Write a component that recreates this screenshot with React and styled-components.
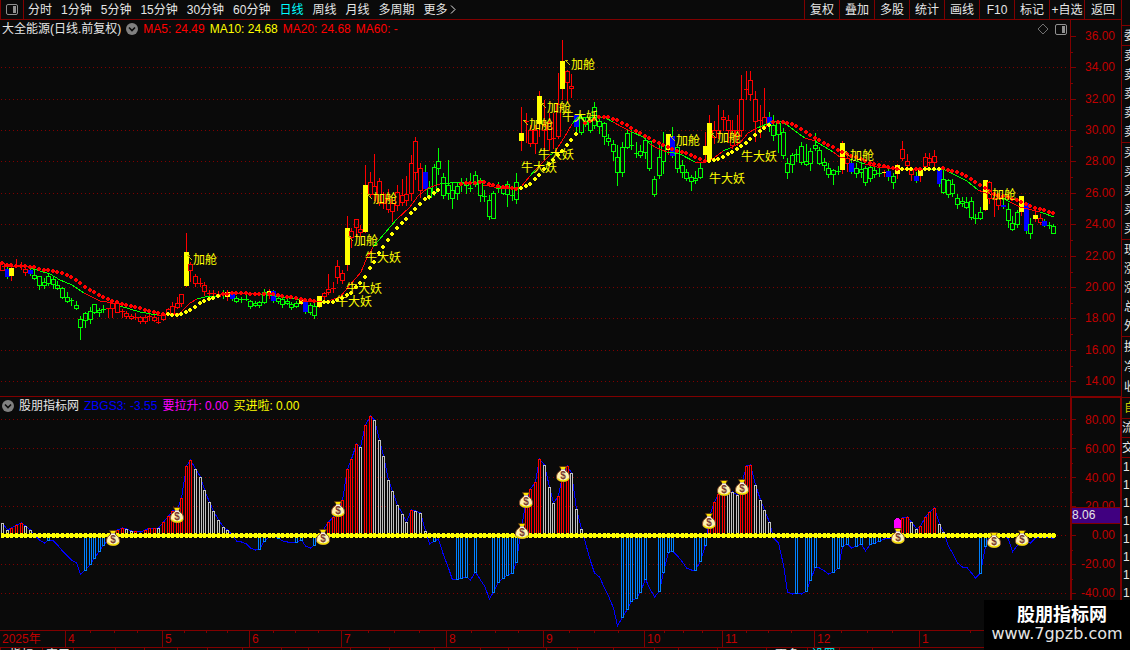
import React from 'react'
import styled, { createGlobalStyle } from 'styled-components';

const GlobalStyle = createGlobalStyle`
*{
box-sizing:border-box;
}
body{
margin:0;
background:#0a0a0a;
color:#e6e6e6;
font:12px/16px "Liberation Sans","Noto Sans CJK SC",sans-serif;
}
`

const line = '#800000'
const red = '#ff0000'
const green = '#00ff00'
const yellow = '#ffff00'

const Screen = styled.div`
position:relative;
display:flex;
height:100vh;
overflow:hidden;
`

const Main = styled.main`
flex:1;
min-width:0;
`

const Toolbar = styled.header`
display:flex;
justify-content:space-between;
height:20px;
border-bottom:1px solid ${line};
border-left:1px solid ${line};
`

const ToolGroup = styled.nav`
display:flex;
align-items:center;
gap:${p => p.$gap || 0}px;
`

const PanelToggle = styled.button`
display:flex;
align-items:center;
justify-content:center;
width:23px;
height:19px;
margin-right:-5px;
padding:0;
border:0;
border-right:1px solid ${line};
background:none;
`

const PeriodButton = styled.button`
padding:0;
border:0;
background:none;
font:inherit;
white-space:nowrap;
color:${p => p.$active ? '#00ffff' : '#e6e6e6'};
`

const ToolButton = styled.button`
width:${p => p.$last ? 37 : 35}px;
height:19px;
padding:0;
border:0;
border-left:1px solid ${line};
background:none;
color:#e6e6e6;
font:inherit;
line-height:18px;
white-space:nowrap;
`

const Pane = styled.section`
display:flex;
border-bottom:1px solid ${line};
`

const Plot = styled.div`
flex:1;
min-width:0;
`

const PaneHead = styled.div`
display:flex;
align-items:center;
gap:5px;
height:${p => p.$height}px;
padding-left:2px;
white-space:nowrap;
`

const HeadIcons = styled.div`
display:flex;
align-items:center;
gap:6px;
margin-left:auto;
padding-right:3px;
`

const Value = styled.span`
color:${p => p.$color};
`

const Chart = styled.svg`
display:block;
width:100%;
height:auto;
shape-rendering:crispEdges;
`

const ChartText = styled.text`
fill:${yellow};
font-size:12px;
`

const Axis = styled.div`
position:relative;
display:flex;
flex:0 0 51px;
border-left:${p => p.$thick ? 2 : 1}px solid ${line};
${p => p.$thick ? `border-top:1px solid ${line}; border-right:1px solid ${line};` : ''}
`

const Ticks = styled.svg`
flex:0 0 5px;
width:5px;
height:100%;
shape-rendering:crispEdges;
`

const AxisLabels = styled.div`
flex:1;
display:flex;
flex-direction:column;
justify-content:space-between;
padding:${p => p.$pad};
text-align:right;
color:#c00000;
`

const Marker = styled.div`
position:absolute;
top:109px;
left:0;
right:0;
height:17px;
border:solid ${line};
border-width:1px 0;
background:#400080;
line-height:15px;
`

const TimeAxis = styled.div`
display:grid;
grid-template-columns:65fr 97fr 87fr 92fr 105fr 97fr 101fr 78fr 92fr 105fr 202fr;
height:16px;
color:#c00000;
`

const Month = styled.div`
padding-left:2px;
${p => p.$first ? '' : `
border-left:1px solid ${line};
background:
linear-gradient(${line},${line}) 25% 0/1px 2px no-repeat,
linear-gradient(${line},${line}) 50% 0/1px 2px no-repeat,
linear-gradient(${line},${line}) 75% 0/1px 2px no-repeat;
`}
`

const Tabs = styled.nav`
display:flex;
border-top:1px solid ${line};
height:20px;
`

const Tab = styled.button`
flex:0 0 ${p => p.$width}px;
height:14px;
padding:0;
border:0;
border-left:1px solid ${line};
background:none;
color:${p => p.$active ? '#00ffff' : '#e6e6e6'};
font:inherit;
line-height:14px;
text-align:center;
`

const Quote = styled.aside`
flex:0 0 9px;
border-left:1px solid ${line};
padding-top:25px;
overflow:hidden;
`

const QuoteGroup = styled.div`
display:grid;
height:${p => p.$height}px;
padding-left:${p => p.$pad}px;
border-top:1px solid ${line};
color:${p => p.$color || '#e6e6e6'};
white-space:nowrap;
align-items:center;
`

const Watermark = styled.div`
position:absolute;
right:0;
bottom:0;
width:146px;
height:50px;
padding-top:4px;
background:#000;
color:#fff;
text-align:center;
`

const WatermarkName = styled.div`
padding-left:10px;
font-size:18px;
line-height:22px;
font-weight:700;
`

const WatermarkUrl = styled.div`
font:16px/16px "DejaVu Sans",sans-serif;
color:#e6e6e6;
`

const periods = ['分时', '1分钟', '5分钟', '15分钟', '30分钟', '60分钟', '日线', '周线', '月线', '多周期']
const tools = ['复权', '叠加', '多股', '统计', '画线', 'F10', '标记', '+自选', '返回']
const months = ['2025年', '4', '5', '6', '7', '8', '9', '10', '11', '12', '1']
const prices = ['36.00', '34.00', '32.00', '30.00', '28.00', '26.00', '24.00', '22.00', '20.00', '18.00', '16.00', '14.00']
const levels = ['80.00', '60.00', '40.00', '20.00', '0.00', '-20.00', '-40.00']

const tabs = [
    [42, '指标'], [31, '窗口'], [42], [29], [33], [30], [35], [39], [27], [42], [39], [45], [46], [28], [38],
    [31], [36], [41], [24], [39], [49], [41, '更多'], [32, '设置', true], [33], [60],
]

const quotes = [
    { rows: ['委'], height: 20, pad: 2 },
    { rows: ['卖', '卖', '卖', '卖', '卖'], height: 97, pad: 2 },
    { rows: ['买', '买', '买', '买', '买'], height: 97, pad: 2 },
    { rows: ['现', '涨', '涨', '总', '外'], height: 97, pad: 2 },
    { rows: ['换', '净', '收'], height: 61, pad: 2 },
    { rows: ['自'], height: 21, pad: 2, color: '#c8c800' },
    { rows: ['流'], height: 19, pad: 0 },
    { rows: ['交'], height: 20, pad: 0 },
    { rows: ['1', '1', '1', '1', '1', '1', '1', '1'], height: 145, pad: 1 },
]

// colour, high, body top, body bottom, low - one entry per day
const candles = `
r 261 263 270 270,b 267 269 277 278,y 266 268 276 280,r 259 265 266 267,y 262 266 267 269,r 267 269 272 275,
b 268 270 274 275,g 270 275 278 279,g 276 276 285 289,g 278 282 285 288,g 273 276 283 285,g 277 279 284 288,
g 281 285 288 289,g 287 288 297 298,g 292 297 301 302,g 298 300 301 305,g 301 305 308 309,g 316 319 327 339,
g 312 313 320 327,g 307 311 319 323,g 304 304 312 313,g 308 310 312 316,g 305 309 310 312,r 308 308 309 317,
r 302 303 308 317,r 302 303 312 312,r 309 311 312 317,r 311 313 316 318,r 314 316 318 319,r 313 317 318 319,
r 316 317 321 323,r 315 317 321 323,r 313 316 317 320,r 314 317 320 321,r 317 322 323 323,r 313 314 319 320,
r 308 309 314 315,r 302 306 314 315,r 297 303 307 308,r 294 294 303 306,y 233 252 286 286,r 262 264 270 281,
r 274 276 283 286,r 278 283 284 286,r 282 285 291 295,r 290 293 293 296,r 290 293 294 298,r 291 294 296 297,
g 290 294 295 298,y 290 292 297 300,b 292 294 299 300,g 296 298 301 302,g 297 299 300 302,g 295 299 299 300,
g 300 301 306 308,g 301 303 305 306,g 301 302 305 307,g 289 292 302 303,y 289 291 296 298,b 290 291 301 302,
g 295 298 301 303,g 298 299 304 307,g 299 301 303 304,g 302 304 307 309,g 301 303 306 307,y 299 300 304 304,
b 300 302 312 313,g 303 305 312 314,g 303 306 315 318,y 296 296 307 307,r 292 293 296 302,r 274 289 292 294,
r 282 288 289 292,r 260 266 277 283,r 270 273 280 283,y 216 228 265 270,r 228 231 237 247,r 219 219 227 236,
r 225 229 232 236,y 165 185 232 232,r 172 182 194 196,r 154 186 194 200,r 178 181 202 205,r 192 194 203 208,
r 189 199 209 212,r 198 203 211 221,r 185 192 205 210,r 179 195 202 205,r 176 194 200 205,r 155 163 193 200,
r 137 141 172 179,r 163 168 190 197,b 165 172 189 190,g 181 188 197 199,g 164 167 192 195,g 148 161 168 174,
g 173 177 195 198,g 160 185 193 199,g 183 190 198 208,g 182 186 193 199,g 178 183 183 191,g 178 182 185 193,
g 173 188 188 191,g 171 175 184 186,g 178 180 195 201,g 190 196 196 201,g 195 200 216 219,g 191 193 218 218,
g 182 186 188 192,g 185 188 193 194,g 181 184 194 206,g 188 195 196 200,g 173 182 199 203,y 107 133 141 150,
r 113 121 122 142,r 125 130 143 146,r 125 130 143 153,y 91 96 124 136,r 100 125 130 150,r 113 122 139 150,
r 113 138 138 148,r 73 104 136 138,y 40 61 89 99,r 70 71 82 101,r 74 86 88 97,b 114 115 127 133,
g 115 118 132 134,g 118 121 124 126,g 118 119 130 132,g 102 107 125 128,g 115 121 126 133,g 122 123 136 144,
g 134 138 141 145,g 140 144 151 160,g 145 157 172 185,g 142 147 172 176,g 129 133 147 148,g 128 145 146 149,
g 142 153 153 157,g 145 151 155 157,g 137 140 152 158,g 141 141 168 170,g 176 179 194 196,g 142 157 175 178,
g 132 145 161 173,y 134 134 150 154,b 127 136 156 157,g 146 147 168 172,g 160 165 172 177,g 169 172 178 180,
g 175 177 181 190,g 171 178 180 183,g 162 168 177 178,y 132 146 155 158,y 115 123 160 160,r 121 130 137 143,
r 105 130 133 138,r 110 117 119 130,r 115 120 130 142,r 120 130 145 148,r 115 130 135 145,r 75 99 130 136,
r 71 89 89 99,r 71 80 94 100,r 91 99 121 141,r 105 120 121 137,r 88 117 126 127,b 112 117 124 131,
g 115 125 135 140,g 121 123 134 152,g 128 132 155 158,g 158 163 172 178,g 153 155 164 172,g 149 154 155 161,
g 142 146 162 164,g 144 161 164 165,g 148 151 163 170,g 133 145 148 150,g 147 150 163 164,g 158 162 165 170,
g 163 168 174 177,g 169 170 174 184,g 166 171 172 174,y 141 143 170 173,r 155 158 163 171,b 161 163 172 173,
g 163 168 173 177,g 163 169 172 177,g 166 168 182 185,g 163 167 178 181,g 166 170 174 177,g 168 173 174 176,
y 170 172 173 176,b 169 171 177 180,g 173 176 182 188,y 164 165 174 178,r 141 149 158 160,r 154 161 165 167,
r 168 170 174 180,b 172 176 181 182,y 168 169 176 181,r 153 157 166 168,r 153 158 162 165,r 150 156 162 166,
b 168 170 184 186,g 170 179 192 193,g 179 180 194 197,g 179 184 193 196,g 194 198 204 208,g 197 201 203 206,
g 197 202 207 208,g 197 201 217 219,g 214 218 219 223,g 207 212 218 219,y 180 180 210 210,r 181 182 198 203,
r 195 198 199 216,r 193 198 205 209,b 197 205 207 208,g 203 209 220 227,g 216 223 229 230,g 210 212 224 227,
y 196 196 212 215,b 203 203 231 233,g 218 224 233 238,y 211 215 219 221,r 214 218 222 224,b 219 221 226 226,
g 222 225 226 228,g 224 226 233 233`.split(',').map(c => {
    const [kind, ...y] = c.trim().split(' ')
    return [kind, ...y.map(Number)]
})

// dotted trend line: yellow while rising, red while falling
const trend = [
    [red, [[2, 263], [8, 265], [20, 266], [32, 267], [45, 270], [58, 272], [70, 276], [80, 283], [90, 290], [100, 296], [112, 301], [127, 305], [140, 308], [152, 312], [163, 314]]],
    [yellow, [[166, 314], [172, 315], [182, 314], [190, 310], [200, 303], [208, 299], [215, 297], [220, 296]]],
    [red, [[223, 294], [240, 293], [258, 294], [270, 294], [290, 297], [300, 299], [318, 301]]],
    [yellow, [[320, 302], [332, 302], [342, 298], [351, 293], [360, 283], [365, 277], [369, 270], [374, 262], [378, 255], [383, 247], [388, 240], [392, 234], [397, 228], [406, 219], [415, 209], [424, 200], [440, 189]]],
    [red, [[458, 184], [483, 182], [493, 185], [517, 189]]],
    [yellow, [[519, 189], [530, 184], [539, 175], [548, 165], [557, 156], [567, 145], [578, 131]]],
    [red, [[582, 124], [599, 117], [608, 117], [617, 120], [627, 125], [636, 131], [644, 135], [653, 140], [663, 145], [677, 151], [687, 153], [695, 157], [706, 161]]],
    [yellow, [[708, 161], [718, 159], [732, 152], [746, 143], [755, 135], [764, 128], [771, 124]]],
    [red, [[773, 122], [783, 122], [792, 124], [801, 129], [810, 135], [823, 142], [833, 147], [847, 154], [860, 159], [873, 164], [887, 167], [899, 169]]],
    [yellow, [[900, 169], [912, 169]]],
    [red, [[913, 169], [921, 169]]],
    [yellow, [[922, 169], [942, 169]]],
    [red, [[943, 168], [953, 171], [967, 176], [980, 185], [992, 193], [1003, 196], [1017, 200], [1035, 208], [1055, 213]]],
]

const average = [
    [red, '2,266 30,266'], [green, '30,268 50,274 60,280 72,285 84,293'], [red, '84,293 100,301 120,304'],
    [green, '120,306 140,312 157,315'], [red, '157,315 165,315 180,313 190,303 197,299'], [green, '197,299 205,297 217,296'],
    [red, '217,295 235,293 258,294'], [green, '258,294 275,296 302,300'],
    [red, '302,301 325,302 340,297 350,285 361,272 366,260 373,247'], [green, '373,247 385,233 397,219'],
    [red, '397,219 410,207 418,196 428,188 440,184'], [green, '440,184 460,182 483,183'], [red, '483,185 500,188 512,189 521,187 530,176'],
    [green, '530,176 535,170'], [red, '535,170 550,155'], [green, '550,155 555,152'], [red, '555,152 567,133 572,124'],
    [green, '572,124 577,118 604,117 613,122'], [red, '613,122 622,127 632,132'], [green, '632,132 643,137 650,144'],
    [red, '650,144 657,148 667,152'], [green, '667,152 680,154 695,162'], [red, '695,162 700,163 710,161 723,151'],
    [green, '723,151 730,148'], [red, '730,148 740,143 748,133 757,128'], [green, '757,128 767,124 772,121 782,122 790,127 799,134 805,138'],
    [red, '805,138 815,141'], [green, '815,141 833,152'], [red, '833,152 840,157 850,159'], [green, '850,159 865,164'],
    [red, '865,164 877,167 897,169 923,169'], [green, '923,169 943,169 957,176 967,181 978,190'], [red, '978,190 983,192 1003,198'],
    [green, '1003,198 1010,202'], [red, '1010,202 1020,207 1040,212'], [green, '1040,212 1054,217'],
]

const buyTags = [[193, 259], [354, 240], [373, 198], [529, 124], [547, 107], [571, 64], [676, 140], [717, 137], [850, 155], [992, 194]]
const bullTags = [[336, 301], [346, 288], [365, 257], [521, 167], [538, 154], [562, 116], [709, 178], [741, 156]]

// day index, y, bar colour (none = line only)
const strength = `
0 523 w,1 530 w,2 528 r,3 525 r,4 523 r,5 526 w,6 530 w,7 535,8 540,9 543,10 540 b,11 541,12 545,13 551,14 556,15 560,16 563,17 574,
18 570 b,19 564 b,20 558 b,21 551 b,22 545 b,23 540,24 533,25 530 r,26 528 r,27 529 w,28 531 w,29 531 r,30 532,31 530 r,32 528 r,
33 528 r,34 528 w,35 522 r,36 516 r,37 511 r,38 509 r,39 498 r,40 466 r,41 460 r,42 469 w,43 477 w,44 490 w,45 502 w,46 511 w,
47 520 w,48 527 w,49 530 w,50 535,51 541,52 542,53 544,54 548,55 550,56 549 b,57 541 b,58 537,59 536,60 538 b,61 541,62 542,63 542,
64 542 b,65 540 b,66 546,67 548,68 545 b,69 536,70 528,71 522 r,72 517 r,73 509 r,74 500 r,75 469 r,76 459 r,77 444 r,78 447 w,
79 425 r,80 416 r,81 420 w,82 440 w,83 456 w,84 480 w,85 491 w,86 505 w,87 514 w,88 522 w,89 510 r,90 511 w,91 513 w,92 531 w,
93 544,94 541 b,95 539,96 555,97 568,98 580,99 579 b,100 578 b,101 577 b,102 580,103 572 b,104 580,105 586,106 599,107 592 b,
108 582 b,109 578 b,110 575 b,111 573 b,112 562 b,113 527,114 500 r,115 489 r,116 482 r,117 459 r,118 465 w,119 487 w,120 503 w,
121 496 r,122 475 r,123 466 r,124 473 w,125 509 w,126 529 w,127 543,128 561,129 573,130 577,131 588,132 596,133 608,134 626,135 617 b,
136 609 b,137 601 b,138 598 b,139 592 b,140 579 b,141 588,142 597,143 591 b,144 572 b,145 552 b,146 551 b,147 556,148 562,149 568,
150 570,151 570 b,152 561 b,153 545 b,154 516 r,155 502 r,156 494 r,157 488 r,158 493 w,159 492 w,160 495 w,161 485 r,162 466 r,
163 465 r,164 485 w,165 500 w,166 510 w,167 522 w,168 538,169 543,170 565,171 592,172 594,173 593 b,174 594,175 591 b,176 580 b,
177 567 b,178 568,179 571,180 574,181 572 b,182 568 b,183 546 b,184 544 b,185 548,186 546 b,187 544 b,188 551,189 544 b,190 543 b,
191 541 b,192 539,193 538,194 538,195 524,196 518 r,197 517 r,198 522 w,199 529 w,200 526 r,201 517 r,202 512 r,203 508 r,204 524 w,
205 532 w,206 546,207 553,208 563,209 567,210 567,211 573,212 578,213 573 b,214 546 b,215 537,216 540,217 536,218 534,219 539,
220 552,221 545,222 537,223 541,224 543,225 538,226 537,227 538,228 537,229 539`.split(',').map(s => {
    const [i, y, kind] = s.trim().split(' ')
    return { i: Number(i), y: Number(y), kind }
})

const bags = [[113, 539], [177, 516], [323, 538], [338, 510], [522, 532], [526, 501], [563, 475], [709, 522], [724, 489], [742, 488], [898, 537], [994, 541], [1022, 539]]

const colors = { r: red, g: green, b: '#0000ff', y: yellow }
const barColors = { r: red, w: '#c0c0c0', b: '#0080ff' }
const dayX = i => Math.round(2.3 + i * 4.59)

const yAt = (points, x) => {
    const n = points.findIndex(p => p[0] >= x)
    if (n < 1) return points[0][1]
    const [x0, y0] = points[n - 1]
    const [x1, y1] = points[n]
    return Math.round(y0 + (y1 - y0) * (x - x0) / (x1 - x0))
}

const GridLines = ({ rows }) => rows.map(y => (
    <line key={y} x1="1" x2="1068" y1={y + 0.5} y2={y + 0.5} stroke={line} strokeDasharray="1 3" />
))

const Candle = ({ i, candle }) => {
    const [kind, high, top, bottom, low] = candle
    const x = dayX(i)
    const wick = kind === 'y' ? red : kind === 'b' ? green : colors[kind]
    const solid = kind === 'y' || kind === 'b'
    return (
        <g>
            <rect x={x} y={high} width="1" height={top - high} fill={wick} />
            <rect x={x} y={bottom} width="1" height={low - bottom + 1} fill={wick} />
            {solid || bottom - top < 2
                ? <rect x={x - 2} y={top} width="5" height={Math.max(bottom - top, 1)} fill={colors[kind]} />
                : <rect x={x - 1.5} y={top + 0.5} width="4" height={bottom - top} fill="none" stroke={colors[kind]} />}
        </g>
    )
}

const PriceChart = () => (
    <Chart viewBox="0 38 1070 358">
        <GridLines rows={[67, 99, 130, 161, 193, 224, 256, 287, 318, 350, 381]} />
        {candles.map((c, i) => <Candle key={i} i={i} candle={c} />)}
        {average.map(([color, points]) => <polyline key={points} points={points} fill="none" stroke={color} />)}
        {trend.map(([color, points]) => candles.map((c, i) => {
            const x = dayX(i)
            if (x < points[0][0] || x > points[points.length - 1][0]) return null
            const y = yAt(points, x)
            return <path key={x} d={`M${x - 1} ${y - 2}h2v1h1v2h-1v1h-2v-1h-1v-2h1z`} fill={color} />
        }))}
        {buyTags.map(([x, y]) => (
            <g key={x}>
                <path d={`M${x - 6} ${y - 4}h3M${x - 6} ${y - 4}l5 5`} stroke="#c8c800" fill="none" />
                <ChartText x={x} y={y + 5}>加舱</ChartText>
            </g>
        ))}
        {bullTags.map(([x, y]) => <ChartText key={x} x={x} y={y + 5}>牛大妖</ChartText>)}
    </Chart>
)

const BagText = styled.text`
fill:#7a3a30;
font-size:10px;
font-weight:700;
text-anchor:middle;
`

const MoneyBag = ({ x, y }) => (
    <g transform={`translate(${x} ${y})`} shapeRendering="auto">
        <path d="M-3.5-8.5L3.5-8.5L1.6-5L-1.6-5z" fill="#ffe600" stroke="#5a3010" strokeWidth="0.8" />
        <path d="M-2-4.8C-5-3-6.5-1-6.5 2C-6.5 5-4 6.5 0 6.5C4 6.5 6.5 5 6.5 2C6.5-1 5-3 2-4.8z" fill="#fff3b0" stroke="#8a5030" />
        <path d="M-5.5 3.6C-3.5 6-1.5 6 0 6C2 6 4.5 5.6 5.6 3.4" fill="none" stroke="#f0e000" strokeWidth="1.4" />
        <path d="M-2-4.8h4" stroke="#fff" strokeWidth="1.4" />
        <BagText x="0" y="4">$</BagText>
    </g>
)

const StrengthChart = () => (
    <Chart viewBox="0 414 1070 216">
        <GridLines rows={[419, 448, 477, 506, 535, 564, 593]} />
        <polyline points={strength.map(s => `${dayX(s.i) + 0.5},${s.y}`).join(' ')} fill="none" stroke="#0000ff" />
        {strength.filter(s => s.kind).map(({ i, y, kind }) => (
            <rect key={i} x={dayX(i) - 0.5} y={Math.min(y, 535) + 0.5} width="2" height={Math.abs(535 - y)} fill="#0a0a0a" stroke={barColors[kind]} />
        ))}
        <path d="M894 528v-7l2-3h3l2 3v7z" fill="#ff00ff" />
        <line x1="1" x2="1056" y1="535.5" y2="535.5" stroke={yellow} strokeWidth="3" />
        {candles.map((c, i) => <rect key={i} x={dayX(i) - 1} y="533" width="3" height="5" fill={yellow} />)}
        {bags.map(([x, y]) => <MoneyBag key={x} x={x} y={y} />)}
    </Chart>
)

const Fold = () => (
    <svg width="12" height="12" viewBox="0 0 12 12">
        <circle cx="6" cy="6" r="6" fill="#808080" />
        <path d="M3 4.5L6 7.5L9 4.5" fill="none" stroke="#0a0a0a" strokeWidth="1.6" />
    </svg>
)

const PanelIcon = () => (
    <svg width="12" height="11" viewBox="0 0 12 11">
        <rect x="0.5" y="0.5" width="11" height="10" rx="1.5" fill="none" stroke="#909090" />
        <rect x="7" y="2" width="3" height="7" fill="#909090" />
    </svg>
)

const App = () => {
    return (
        <Screen>
            <GlobalStyle />
            <Main>
                <Toolbar>
                    <ToolGroup $gap={9}>
                        <PanelToggle aria-label="panel"><PanelIcon /></PanelToggle>
                        {periods.map(p => <PeriodButton key={p} $active={p === '日线'}>{p}</PeriodButton>)}
                        <PeriodButton>
                            更多
                            <svg width="8" height="9" viewBox="0 0 8 9"><path d="M3 0.5L7 4.5L3 8.5" fill="none" stroke="#e6e6e6" /></svg>
                        </PeriodButton>
                    </ToolGroup>
                    <ToolGroup>
                        {tools.map(t => <ToolButton key={t} $last={t === '返回'}>{t}</ToolButton>)}
                    </ToolGroup>
                </Toolbar>

                <Pane>
                    <Plot>
                        <PaneHead $height={18}>
                            <span>大全能源(日线.前复权)</span>
                            <Fold />
                            <Value $color={red}>MA5: 24.49</Value>
                            <Value $color={yellow}>MA10: 24.68</Value>
                            <Value $color={red}>MA20: 24.68</Value>
                            <Value $color={red}>MA60: -</Value>
                            <HeadIcons>
                                <svg width="12" height="12" viewBox="0 0 12 12"><path d="M6 1L11 6L6 11L1 6z" fill="none" stroke="#707070" /></svg>
                                <PanelIcon />
                            </HeadIcons>
                        </PaneHead>
                        <PriceChart />
                    </Plot>
                    <Axis>
                        <Ticks viewBox="0 20 5 376" preserveAspectRatio="none">
                            {prices.map((p, i) => (
                                <path key={p} d={`M0 ${36.5 + Math.round(i * 31.36)}h5M0 ${52.5 + Math.round(i * 31.36)}h2`} stroke={line} />
                            ))}
                        </Ticks>
                        <AxisLabels $pad="8px 6px 7px 0">
                            {prices.map(p => <span key={p}>{p}</span>)}
                        </AxisLabels>
                    </Axis>
                </Pane>

                <Pane>
                    <Plot>
                        <PaneHead $height={17}>
                            <Fold />
                            <span>股朋指标网</span>
                            <Value $color="#0000ff">ZBGS3: -3.55</Value>
                            <Value $color="#ff00ff">要拉升: 0.00</Value>
                            <Value $color={yellow}>买进啦: 0.00</Value>
                        </PaneHead>
                        <StrengthChart />
                    </Plot>
                    <Axis $thick>
                        <Ticks viewBox="0 398 5 232" preserveAspectRatio="none">
                            {levels.map((l, i) => (
                                <path key={l} d={`M0 ${419.5 + i * 29}h4M0 ${434.5 + i * 29}h1`} stroke={line} />
                            ))}
                        </Ticks>
                        <AxisLabels $pad="14px 5px 29px 0">
                            {levels.map(l => <span key={l}>{l}</span>)}
                        </AxisLabels>
                        <Marker>8.06</Marker>
                    </Axis>
                </Pane>

                <TimeAxis>
                    {months.map((m, i) => <Month key={m} $first={i === 0}>{m}</Month>)}
                </TimeAxis>
                <Tabs>
                    {tabs.map(([width, name, active], i) => <Tab key={i} $width={width} $active={active}>{name}</Tab>)}
                </Tabs>
            </Main>

            <Quote>
                {quotes.map((q, i) => (
                    <QuoteGroup key={i} $height={q.height} $pad={q.pad} $color={q.color}>
                        {q.rows.map((r, n) => <span key={n}>{r}</span>)}
                    </QuoteGroup>
                ))}
            </Quote>

            <Watermark>
                <WatermarkName>股朋指标网</WatermarkName>
                <WatermarkUrl>www.7gpzb.com</WatermarkUrl>
            </Watermark>
        </Screen>
    )
}

export default App
